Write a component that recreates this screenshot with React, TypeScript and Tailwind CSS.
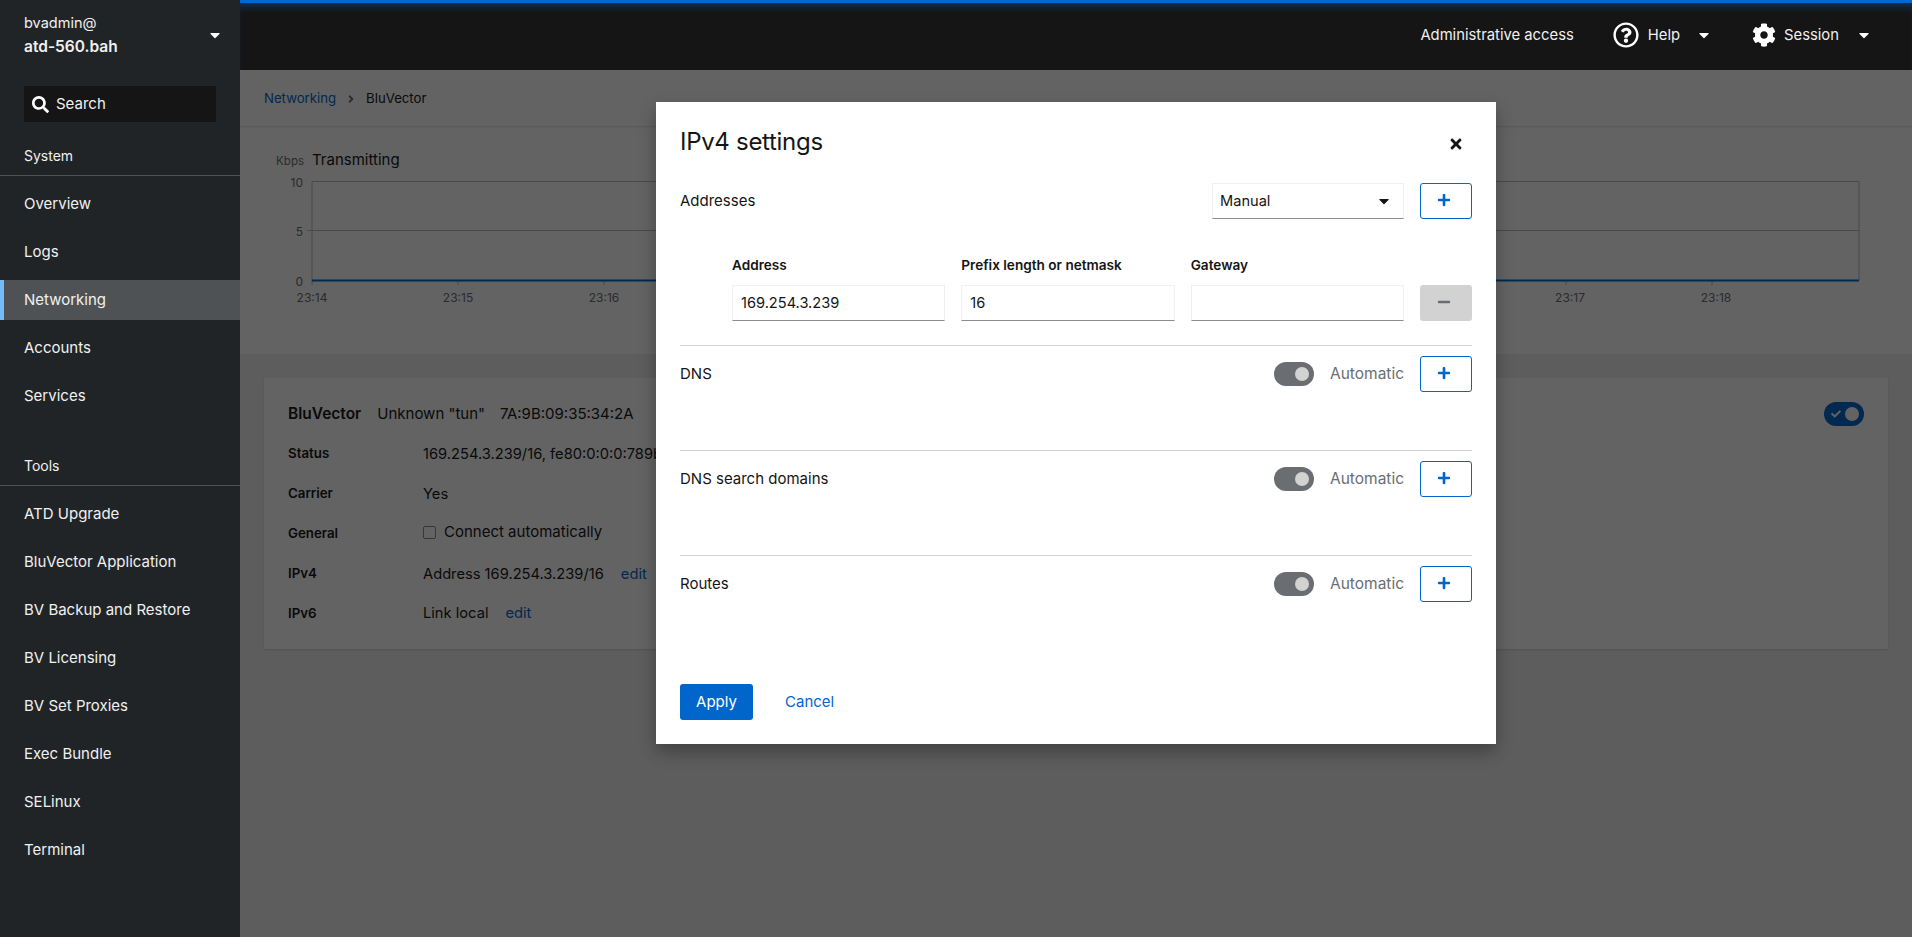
import { FaSearch, FaCaretDown, FaCog, FaPlus, FaMinus, FaTimes, FaAngleRight, FaCheck, FaRegQuestionCircle } from "react-icons/fa";

const systemItems = ["Overview", "Logs", "Networking", "Accounts", "Services"];
const toolItems = [
  "ATD Upgrade",
  "BluVector Application",
  "BV Backup and Restore",
  "BV Licensing",
  "BV Set Proxies",
  "Exec Bundle",
  "SELinux",
  "Terminal",
];

function NavItem({ label, active }: { label: string; active?: boolean }) {
  return (
    <div
      className={
        active
          ? "h-10 mb-2 flex items-center pl-5 border-l-4 border-[#73bcf7] bg-[#4f5255] text-[#f0f0f0] text-[15px]"
          : "h-10 mb-2 flex items-center pl-6 text-[#f0f0f0] text-[15px]"
      }
    >
      {label}
    </div>
  );
}

function Sidebar() {
  return (
    <aside className="w-[240px] h-full shrink-0 bg-[#212427] flex flex-col">
      <div className="h-[70px] pl-6 pr-6 pt-[11px] flex justify-between">
        <div>
          <div className="text-[14.5px] leading-6 text-[#f0f0f0]">bvadmin@</div>
          <div className="text-[15.5px] leading-6 font-semibold text-[#f0f0f0]">atd-560.bah</div>
        </div>
        <FaCaretDown className="w-4 h-4 text-white mt-4 -mr-[7px]" />
      </div>
      <div className="mx-6 mt-4 h-9 bg-[#151515] flex items-center pl-2 text-[#f0f0f0]">
        <FaSearch className="w-[17px] h-[17px] text-white" />
        <span className="ml-[7px] text-[15px]">Search</span>
      </div>
      <div className="mt-6 h-[30px] pl-6 text-sm leading-5 text-[#f0f0f0] border-b border-[#4f5255]">System</div>
      <div className="mt-2">
        {systemItems.map((item) => (
          <NavItem key={item} label={item} active={item === "Networking"} />
        ))}
      </div>
      <div className="mt-[32px] h-[30px] pl-6 text-sm leading-5 text-[#f0f0f0] border-b border-[#4f5255]">Tools</div>
      <div className="mt-2">
        {toolItems.map((item) => (
          <NavItem key={item} label={item} />
        ))}
      </div>
    </aside>
  );
}

function TopBar() {
  return (
    <header className="h-[70px] shrink-0 bg-[#151515] border-t-[3px] border-[#06c] shadow-[inset_0_8px_8px_-5px_rgba(0,102,204,0.4)] flex items-center justify-end pr-[40px] pb-[3px] text-[#f0f0f0] text-[14.8px]">
      <span>Administrative access</span>
      <FaRegQuestionCircle className="w-[26px] h-[26px] text-white ml-[39px]" />
      <span className="ml-[9px]">Help</span>
      <FaCaretDown className="w-4 h-4 text-white ml-[16px]" />
      <FaCog className="w-6 h-6 text-white ml-[40px]" />
      <span className="ml-2">Session</span>
      <FaCaretDown className="w-4 h-4 text-white ml-[17px]" />
    </header>
  );
}

function Chart() {
  const ticks = ["23:14", "23:15", "23:16", "23:17", "23:18"];
  const left = [0, 146, 292, 1254, 1400];
  return (
    <svg className="block w-full h-[173px] overflow-visible" viewBox="0 0 1672 173" fontFamily="Inter, sans-serif">
      <g stroke="#b8bbbe" fill="none" strokeWidth="1">
        <path d="M72 0.5H1619M67 49.5H1619M72 0.5V99M1619 0.5V99" />
        {left.map((x) => (
          <path key={x} d={`M${x + 72} 99V104`} />
        ))}
      </g>
      <path d="M72 99.5H1619" stroke="#06c" strokeWidth="2" />
      <g fill="#6a6e73" fontSize="12" textAnchor="end">
        <text x="63" y="6">10</text>
        <text x="63" y="55">5</text>
        <text x="63" y="105">0</text>
      </g>
      <g fill="#6a6e73" fontSize="12" textAnchor="middle">
        {ticks.map((t, i) => (
          <text key={t} x={left[i] + 72 + (i > 2 ? 4 : 0)} y="121">{t}</text>
        ))}
      </g>
    </svg>
  );
}

function Row({ label, children }: { label: string; children: React.ReactNode }) {
  return (
    <>
      <div className="h-10 flex items-center text-[13.3px] font-semibold">{label}</div>
      <div className="h-10 flex items-center">{children}</div>
    </>
  );
}

function Page() {
  return (
    <div className="h-full bg-[#f0f0f0] text-[#151515]">
      <div className="h-14 bg-white pl-6 pt-[1px] flex items-center text-[13.2px] shadow-[0_1px_2px_rgba(0,0,0,0.15)] relative">
        <span className="text-[#06c]">Networking</span>
        <FaAngleRight className="w-3 h-3 text-[#6a6e73] mx-[9px]" />
        <span>BluVector</span>
      </div>
      <div className="h-[228px] bg-white pt-[20px]">
        <div className="h-[28px] flex items-center text-[15px] mb-[7px]">
          <span className="w-[64px] text-right text-[11.5px] text-[#6a6e73] pt-[3px]">Kbps</span>
          <span className="ml-[8px]">Transmitting</span>
        </div>
        <Chart />
      </div>
      <div className="mx-6 mt-6 h-[271px] bg-white shadow-[0_1px_2px_rgba(0,0,0,0.15)] px-6 pt-[25px] relative">
        <div className="flex items-center h-[22px] text-[15px]">
          <span className="font-semibold text-[15.5px]">BluVector</span>
          <span className="ml-4">Unknown "tun"</span>
          <span className="ml-[15px]">7A:9B:09:35:34:2A</span>
        </div>
        <div className="absolute right-6 top-6 w-10 h-6 rounded-full bg-[#06c] flex items-center justify-between pl-[7px] pr-[5px]">
          <FaCheck className="w-2.5 h-2.5 text-white" />
          <span className="w-3.5 h-3.5 rounded-full bg-white" />
        </div>
        <div className="grid grid-cols-[135px_1fr] mt-[9px] text-[14.7px]">
          <Row label="Status"><span>169.254.3.239/16, fe80:0:0:0:789b:9ff:fe35:342a/64</span></Row>
          <Row label="Carrier"><span>Yes</span></Row>
          <Row label="General">
            <span className="flex items-center -mt-[4px]">
              <span className="w-[13px] h-[13px] border border-[#8a8d90] rounded-[2px] bg-white" />
              <span className="ml-2 text-[15px]">Connect automatically</span>
            </span>
          </Row>
          <Row label="IPv4">
            <span>Address 169.254.3.239/16</span>
            <span className="ml-[17px] text-[#06c]">edit</span>
          </Row>
          <Row label="IPv6">
            <span className="-mt-[2px]">Link local</span>
            <span className="ml-[17px] -mt-[2px] text-[#06c]">edit</span>
          </Row>
        </div>
      </div>
    </div>
  );
}

function PlusButton() {
  return (
    <button className="w-[52px] h-9 shrink-0 rounded-[3px] border border-[#06c] bg-white flex items-center justify-center">
      <FaPlus className="w-3.5 h-3.5 text-[#06c] -ml-[4px] -mt-[2px]" />
    </button>
  );
}

function AutoSection({ title }: { title: string }) {
  return (
    <div className="h-[105px] border-t border-[#d2d2d2] pt-[10px]">
      <div className="flex items-center h-9">
        <span className="flex-1">{title}</span>
        <span className="w-10 h-6 rounded-full bg-[#6a6e73] flex items-center justify-end pr-[5px]">
          <span className="w-3.5 h-3.5 rounded-full bg-[#d2d2d2]" />
        </span>
        <span className="w-[73px] ml-4 mr-[17px] text-[15.5px] text-[#6a6e73] whitespace-nowrap">Automatic</span>
        <PlusButton />
      </div>
    </div>
  );
}

function TextBox({ value }: { value: string }) {
  return (
    <div className="h-9 border border-[#f0f0f0] border-b-[#8a8d90] bg-white flex items-center pl-2 pt-[2px] text-[14.6px]">{value}</div>
  );
}

function Modal() {
  return (
    <div className="w-[840px] h-[642px] bg-white shadow-[0_8px_16px_rgba(3,3,3,0.3)] px-6 pt-6 text-[#151515] text-[15px] flex flex-col">
      <div className="h-[33px] flex items-center justify-between">
        <h1 className="text-2xl font-normal tracking-[-0.3px] -mt-[1px]">IPv4 settings</h1>
        <FaTimes className="w-4 h-4 text-[#151515] mr-2 mt-[2px]" />
      </div>
      <div className="flex items-center h-9 mt-6">
        <span className="flex-1">Addresses</span>
        <div className="w-[192px] h-9 border border-[#f0f0f0] border-b-[#8a8d90] flex items-center justify-between pl-[7px] pr-[11px] text-[14.6px]">
          <span className="pt-[1px]">Manual</span>
          <FaCaretDown className="w-4 h-4 text-[#151515]" />
        </div>
        <span className="w-4" />
        <PlusButton />
      </div>
      <div className="pl-[52px] mt-[36px] grid grid-cols-[1fr_1fr_1fr_52px] gap-x-4 gap-y-[10px] mb-6">
        <div className="text-[13.6px] font-semibold leading-5">Address</div>
        <div className="text-[13.6px] font-semibold leading-5">Prefix length or netmask</div>
        <div className="text-[13.6px] font-semibold leading-5">Gateway</div>
        <div />
        <TextBox value="169.254.3.239" />
        <TextBox value="16" />
        <TextBox value="" />
        <button className="h-9 rounded-[3px] bg-[#d2d2d2] flex items-center justify-center">
          <FaMinus className="w-3.5 h-3.5 text-[#6a6e73] -ml-[4px] -mt-[2px]" />
        </button>
      </div>
      <AutoSection title="DNS" />
      <AutoSection title="DNS search domains" />
      <AutoSection title="Routes" />
      <div className="flex items-center mt-[24px]">
        <button className="w-[73px] h-9 rounded-[3px] bg-[#06c] text-white">Apply</button>
        <span className="ml-8 text-[#06c]">Cancel</span>
      </div>
    </div>
  );
}

export default function App() {
  return (
    <div className="w-[1912px] h-[937px] flex overflow-hidden font-['Inter',sans-serif]">
      <Sidebar />
      <div className="flex-1 flex flex-col min-w-0">
        <TopBar />
        <div className="flex-1 relative overflow-hidden">
          <Page />
          {/* PF backdrop over the iframe content only */}
          <div className="absolute inset-0 bg-[rgba(3,3,3,0.62)] flex justify-center items-start pt-8">
            <Modal />
          </div>
        </div>
      </div>
    </div>
  );
}
